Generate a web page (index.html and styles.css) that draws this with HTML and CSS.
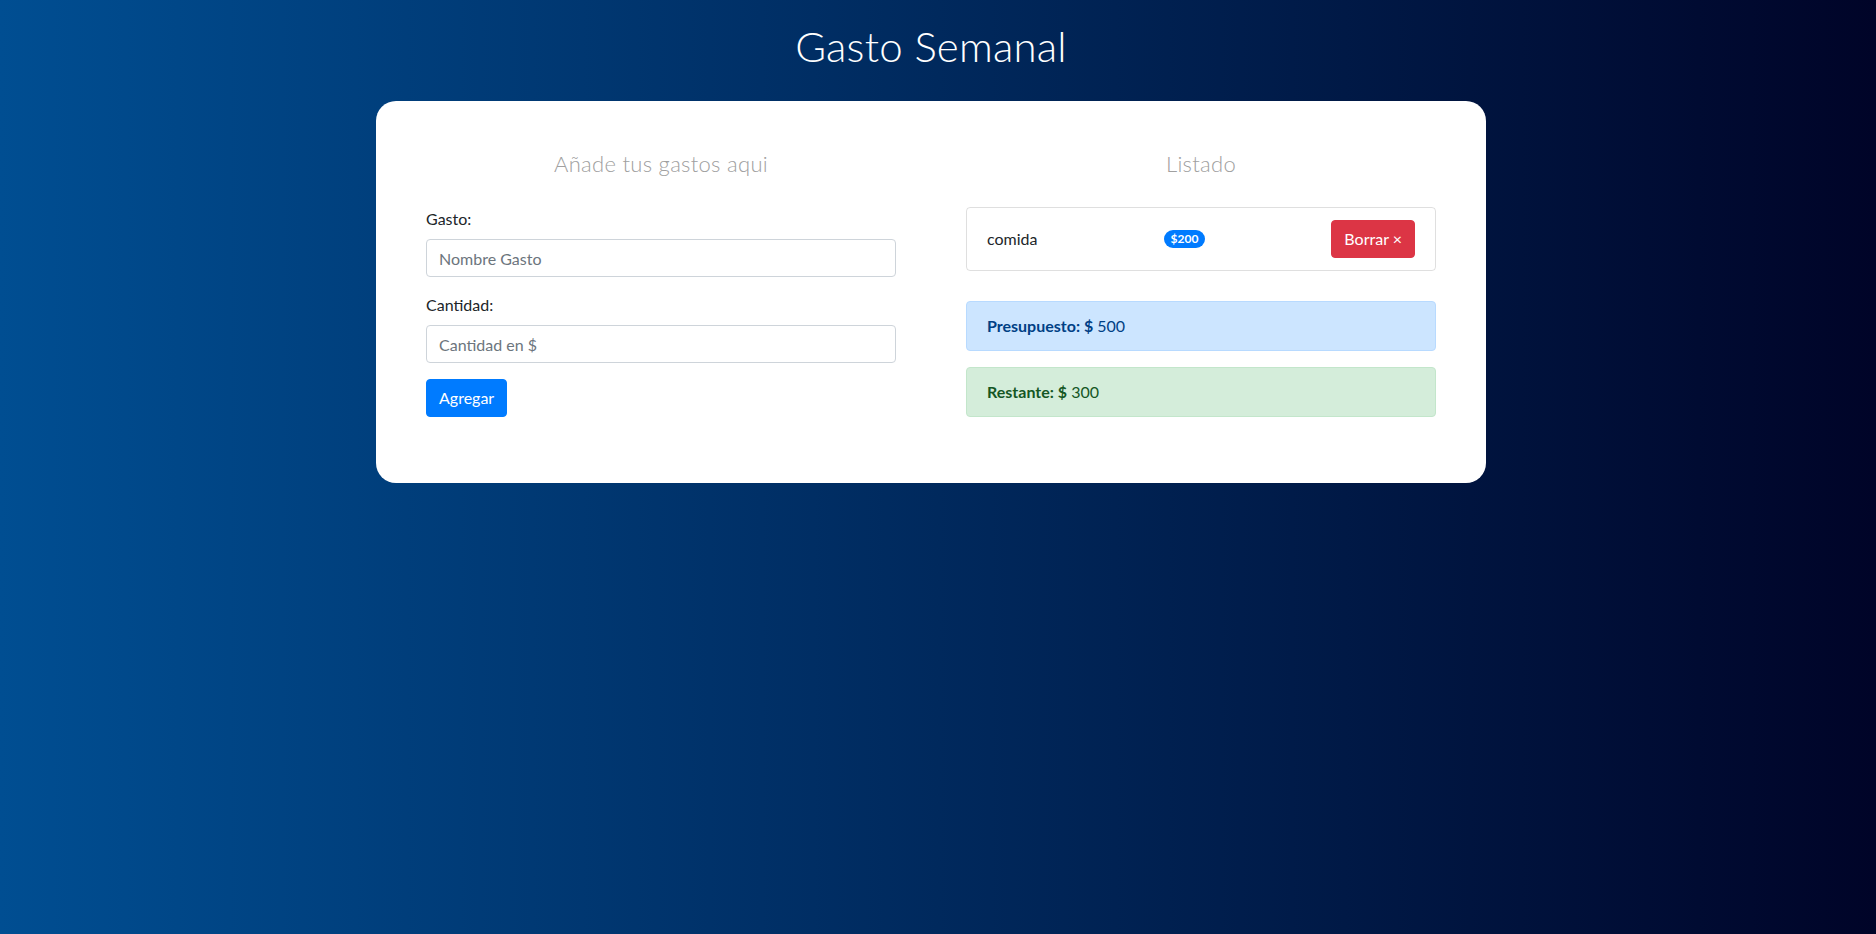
FILE: index.html
```html
<!DOCTYPE html>
<html lang="es">
<head>
<meta charset="utf-8">
<title>Gasto Semanal</title>
<link rel="stylesheet" href="styles.css">
</head>
<body>
<div class="page">
  <header class="header">
    <h1 class="title">Gasto Semanal</h1>
  </header>
  <main class="card">
    <section class="col">
      <h2 class="subtitle">Añade tus gastos aqui</h2>
      <form class="form">
        <div class="field">
          <label class="label">Gasto:</label>
          <input class="input" type="text" placeholder="Nombre Gasto">
        </div>
        <div class="field">
          <label class="label">Cantidad:</label>
          <input class="input" type="number" placeholder="Cantidad en $">
        </div>
        <button class="btn btn-primary" type="button">Agregar</button>
      </form>
    </section>
    <section class="col">
      <h2 class="subtitle">Listado</h2>
      <ul class="list">
        <li class="item">
          <span class="item-name">comida</span>
          <span class="badge">$200</span>
          <button class="btn btn-danger" type="button">Borrar &times;</button>
        </li>
      </ul>
      <div class="alert alert-primary"><strong>Presupuesto: $</strong> 500</div>
      <div class="alert alert-success"><strong>Restante: $</strong> 300</div>
    </section>
  </main>
</div>
</body>
</html>
```

FILE: styles.css
```css
* {
  box-sizing: border-box;
}

html, body {
  margin: 0;
  min-height: 100%;
}

body {
  min-height: 100vh;
  background: linear-gradient(to right, #004e92, #000428);
  font-family: "Lato", "Liberation Sans", sans-serif;
  font-size: 16px;
  line-height: 24px;
  color: #212529;
}

.page {
  display: flex;
  flex-direction: column;
  align-items: center;
  padding: 21px 14px 0 0;
}

.title {
  margin: 0 0 30px;
  font-size: 42px;
  line-height: 50px;
  font-weight: 300;
  color: #ffffff;
  letter-spacing: 0.2px;
}

.card {
  width: 1110px;
  background: #ffffff;
  border-radius: 20px;
  padding: 50px;
  display: grid;
  grid-template-columns: 1fr 1fr;
  column-gap: 70px;
}

.col {
  display: flex;
  flex-direction: column;
}

.subtitle {
  margin: 0 0 30px;
  text-align: center;
  font-size: 22px;
  line-height: 26px;
  font-weight: 300;
  color: #a0a0a0;
  letter-spacing: 0.3px;
}

.form {
  display: flex;
  flex-direction: column;
  align-items: flex-start;
  margin-bottom: 16px;
}

.field {
  display: flex;
  flex-direction: column;
  width: 100%;
  margin-bottom: 16px;
}

.label {
  margin-bottom: 8px;
}

.input {
  height: 38px;
  width: 100%;
  padding: 6px 12px;
  border: 1px solid #ced4da;
  border-radius: 4px;
  font-family: inherit;
  font-size: 16px;
  color: #495057;
  background: #fff;
}

.input::placeholder {
  color: #6c757d;
}

.input::-webkit-outer-spin-button,
.input::-webkit-inner-spin-button {
  -webkit-appearance: none;
  margin: 0;
}

.btn {
  height: 38px;
  padding: 6px 12px;
  border: 1px solid transparent;
  border-radius: 4px;
  font-family: inherit;
  font-size: 16px;
  line-height: 24px;
  color: #fff;
  cursor: pointer;
}

.btn-primary {
  background: #007bff;
  border-color: #007bff;
}

.btn-danger {
  background: #dc3545;
  border-color: #dc3545;
}

.list {
  list-style: none;
  margin: 0 0 30px;
  padding: 0;
}

.item {
  display: flex;
  justify-content: space-between;
  align-items: center;
  padding: 12px 20px;
  border: 1px solid rgba(0, 0, 0, 0.125);
  border-radius: 4px;
}

.badge {
  display: inline-block;
  padding: 3px 7px;
  font-size: 12px;
  line-height: 12px;
  font-weight: 700;
  color: #fff;
  background: #007bff;
  border-radius: 10rem;
}

.alert {
  padding: 12px 20px;
  border: 1px solid transparent;
  border-radius: 4px;
  margin-bottom: 16px;
}

.alert-primary {
  color: #004085;
  background: #cce5ff;
  border-color: #b8daff;
}

.alert-success {
  color: #155724;
  background: #d4edda;
  border-color: #c3e6cb;
}
```
